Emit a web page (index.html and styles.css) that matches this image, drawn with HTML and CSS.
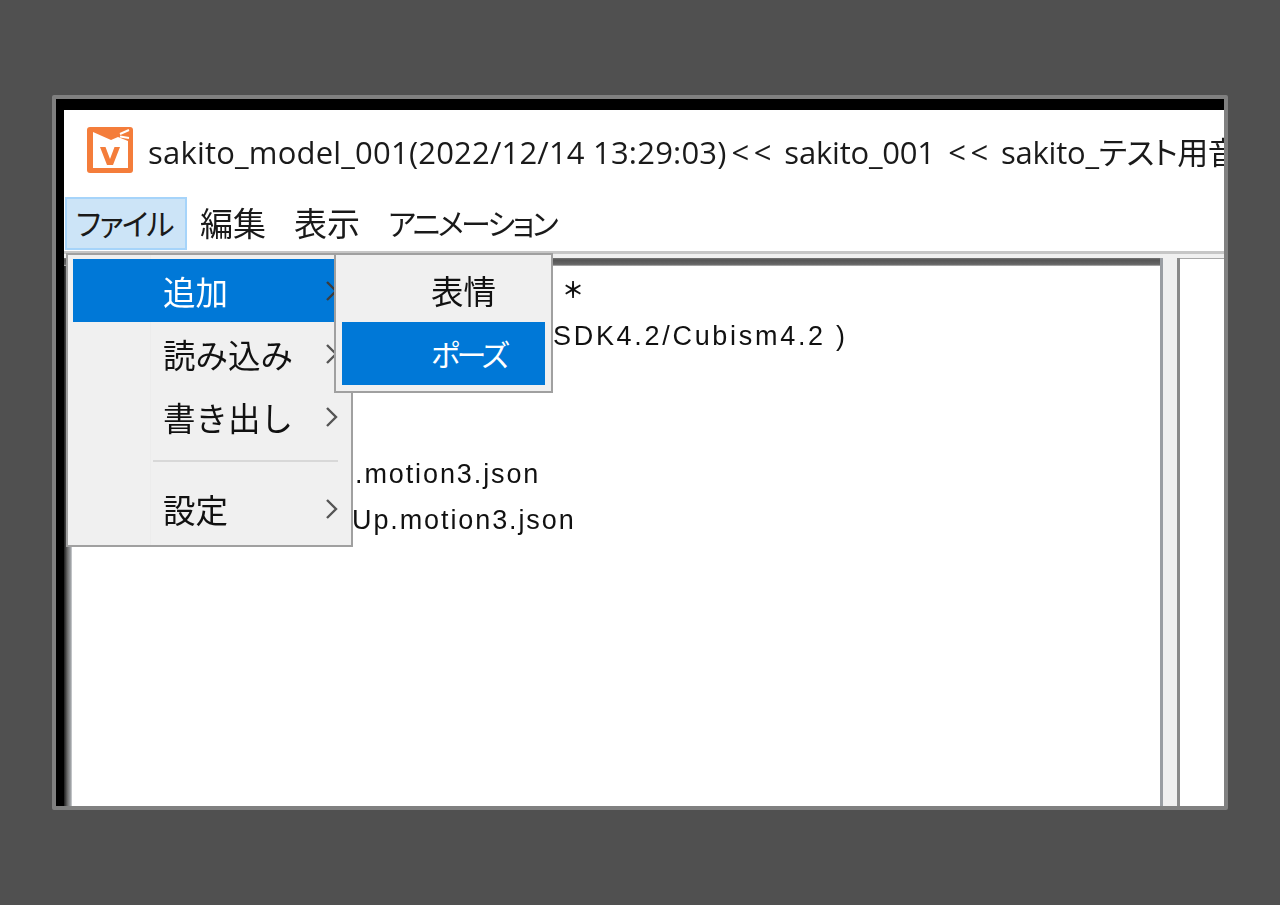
FILE: index.html
```html
<!DOCTYPE html>
<html lang="ja">
<head>
<meta charset="utf-8">
<title>sakito_model_001</title>
<link rel="stylesheet" href="styles.css">
</head>
<body>
<div class="frame">
  <div class="window">
    <header class="titlebar">
      <svg class="app-icon" viewBox="0 0 46 46" width="46" height="46">
        <rect x="0" y="0" width="46" height="46" rx="3" fill="#f47d3b"/>
        <path d="M6 5 L24 13 L31 10 L41 14 L41 41 L6 41 Z" fill="#fff"/>
        <path d="M33 7 L42 3 M33 9.5 L42 11" fill="none" stroke="#fff" stroke-width="2"/>
        <path d="M13 20 H18.5 L23 32 L27.5 20 H33 L26 38 H20 Z" fill="#f47d3b"/>
      </svg>
      <span class="title-text">sakito_model_001(2022/12/14 13:29:03)<span class="sep">&lt;&lt;</span> <span class="seg">sakito_001</span> <span class="sep">&lt;&lt;</span> <span class="seg">sakito_</span><span class="kana-title">テスト用音</span></span>
    </header>
    <nav class="menubar">
      <span class="menu-item active kana kana-file">ファイル</span>
      <span class="menu-item">編集</span>
      <span class="menu-item">表示</span>
      <span class="menu-item kana kana-anim">アニメーション</span>
    </nav>
    <div class="workspace">
      <main class="pane-left">
        <div class="line l1">＊</div>
        <div class="line l2">SDK4.2/Cubism4.2 )</div>
        <div class="line"></div>
        <div class="line"></div>
        <div class="line l5">.motion3.json</div>
        <div class="line l6">Up.motion3.json</div>
      </main>
      <div class="splitter"></div>
      <aside class="pane-right"></aside>
    </div>
  </div>

  <div class="dropdown">
    <div class="drop-gutter"></div>
    <div class="drop-row selected"><span class="drop-label">追加</span>
      <svg class="chev" viewBox="0 0 14 22" width="14" height="22"><path d="M2 2 L11 11 L2 20" fill="none" stroke="#3c3c3c" stroke-width="2.4"/></svg></div>
    <div class="drop-row"><span class="drop-label">読み込み</span>
      <svg class="chev" viewBox="0 0 14 22" width="14" height="22"><path d="M2 2 L11 11 L2 20" fill="none" stroke="#555" stroke-width="2.4"/></svg></div>
    <div class="drop-row"><span class="drop-label">書き出し</span>
      <svg class="chev" viewBox="0 0 14 22" width="14" height="22"><path d="M2 2 L11 11 L2 20" fill="none" stroke="#555" stroke-width="2.4"/></svg></div>
    <div class="drop-sep"></div>
    <div class="drop-row"><span class="drop-label">設定</span>
      <svg class="chev" viewBox="0 0 14 22" width="14" height="22"><path d="M2 2 L11 11 L2 20" fill="none" stroke="#555" stroke-width="2.4"/></svg></div>
  </div>

  <div class="submenu">
    <div class="sub-row">表情</div>
    <div class="sub-row selected kana kana-pose">ポーズ</div>
  </div>
</div>
</body>
</html>
```
FILE: styles.css
```css
* { box-sizing: border-box; }
html, body { margin: 0; height: 100%; }
body {
  background: #505050;
  padding: 95px 52px;
  font-family: "Open Sans", "Noto Sans CJK JP", sans-serif;
  color: #1a1a1a;
  overflow: hidden;
}
.frame {
  position: relative;
  width: 1176px;
  height: 715px;
  border: 4px solid #808080;
  border-radius: 2px;
  background: #000;
  overflow: hidden;
}
.window {
  display: flex;
  flex-direction: column;
  height: 100%;
  padding: 11px 0 0 8px;
}
.titlebar {
  flex: none;
  display: flex;
  align-items: center;
  gap: 15px;
  height: 87px;
  padding: 0 0 7px 23px;
  background: #fff;
  white-space: nowrap;
  overflow: hidden;
}
.app-icon { flex: none; filter: blur(0.5px); }
.title-text {
  font-size: 31px;
  letter-spacing: 0.2px;
  filter: blur(0.5px);
}
.sep { letter-spacing: 4.5px; margin-left: 5px; }
.seg { letter-spacing: -0.2px; }
.kana-title { font-feature-settings: "palt"; letter-spacing: -0.5px; }
.menubar {
  flex: none;
  display: flex;
  align-items: flex-start;
  height: 57px;
  padding-left: 1px;
  background: #fff;
  border-bottom: 3px solid #c6c6c6;
  font-family: "Noto Sans CJK JP", sans-serif;
  font-size: 33px;
}
.menu-item {
  height: 53px;
  line-height: 50px;
  padding: 0 15px 0 13px;
  white-space: nowrap;
  filter: blur(0.5px);
}
.kana { font-feature-settings: "palt"; font-size: 30px; }
.kana-file { letter-spacing: -1.8px; }
.kana-anim { letter-spacing: -2.7px; }
.kana-pose { letter-spacing: -3.3px; }
.menu-item.active {
  width: 122px;
  padding: 0 0 0 9px;
  background: #cce4f7;
  border: 2px solid #a6d4fa;
  line-height: 47px;
  filter: none;
}
.workspace {
  flex: 1;
  display: flex;
  min-height: 0;
  background: #f0f0f0;
}
.pane-left {
  flex: none;
  width: 1099px;
  margin-top: 4px;
  padding: 9px 0 0 8px;
  border-right: 3px solid #9a9ea3;
  background:
    linear-gradient(180deg, #777, #555 25%, #666 80%, #bcbcbc) top / 100% 8px no-repeat,
    linear-gradient(90deg, #1c1c1c, #6e6e6e 45%, #a2a5a9 85%, #d6d8da) left / 8px 100% no-repeat,
    #fff;
  font-family: "Liberation Sans", sans-serif;
  font-size: 27px;
  filter: blur(0.35px);
}
.line {
  height: 46px;
  line-height: 46px;
  white-space: nowrap;
  letter-spacing: 1.9px;
  color: #111;
}
.l1 {
  padding-left: 490px;
  line-height: 42px;
  font-family: "Noto Sans CJK JP", sans-serif;
  font-size: 22px;
  font-weight: 700;
}
.l2 { padding-left: 481px; letter-spacing: 2.7px; }
.l5 { padding-left: 283px; }
.l6 { padding-left: 280px; }
.splitter {
  flex: none;
  width: 17px;
  margin-top: 4px;
  background: #f0f0f0;
  border-right: 3px solid #8a8a8a;
}
.pane-right {
  flex: 1;
  margin-top: 4px;
  background: #fff;
  border-top: 1px solid #a8a8a8;
}
.dropdown, .submenu {
  position: absolute;
  background: #f0f0f0;
  border: 2px solid #a0a0a0;
  font-family: "Noto Sans CJK JP", sans-serif;
  font-size: 32.5px;
  color: #111;
}
.dropdown {
  left: 10px;
  top: 154px;
  width: 287px;
  height: 294px;
  padding: 4px 5px;
}
.drop-gutter {
  position: absolute;
  left: 82px;
  top: 0;
  bottom: 0;
  width: 1px;
  background: #ececec;
}
.drop-row {
  position: relative;
  display: flex;
  align-items: center;
  justify-content: space-between;
  height: 63px;
  padding: 0 7px 0 90px;
}
.drop-label { filter: blur(0.4px); }
.drop-row.selected, .sub-row.selected {
  background: #0078d7;
  color: #fff;
}
.chev { filter: blur(0.4px); }
.drop-sep {
  position: relative;
  height: 2px;
  margin: 12px 8px 15px 80px;
  background: #d8d8d8;
}
.submenu {
  left: 278px;
  top: 154px;
  width: 219px;
  height: 140px;
  padding: 4px 6px;
}
.sub-row {
  height: 63px;
  line-height: 62px;
  padding-left: 89px;
  filter: blur(0.4px);
}
.sub-row.selected { filter: none; }
```
